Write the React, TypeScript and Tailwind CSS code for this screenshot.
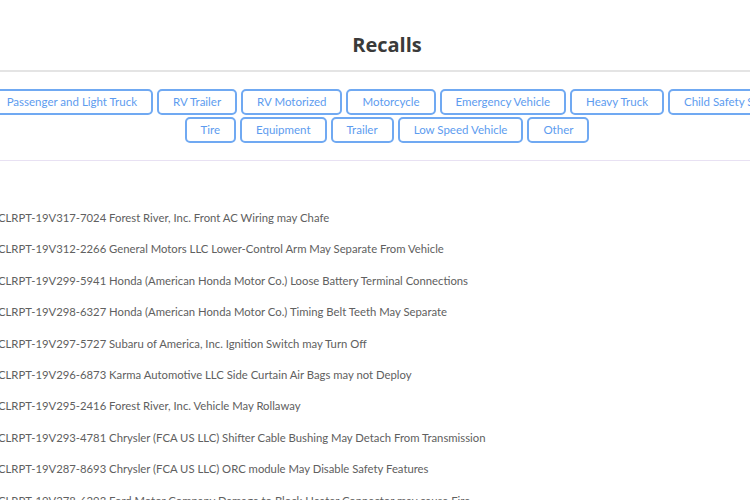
const categories1 = [
  "Passenger and Light Truck",
  "RV Trailer",
  "RV Motorized",
  "Motorcycle",
  "Emergency Vehicle",
  "Heavy Truck",
  "Child Safety Seat",
];
const categories2 = ["Tire", "Equipment", "Trailer", "Low Speed Vehicle", "Other"];

const recalls = [
  "CLRPT-19V317-7024 Forest River, Inc. Front AC Wiring may Chafe",
  "CLRPT-19V312-2266 General Motors LLC Lower-Control Arm May Separate From Vehicle",
  "CLRPT-19V299-5941 Honda (American Honda Motor Co.) Loose Battery Terminal Connections",
  "CLRPT-19V298-6327 Honda (American Honda Motor Co.) Timing Belt Teeth May Separate",
  "CLRPT-19V297-5727 Subaru of America, Inc. Ignition Switch may Turn Off",
  "CLRPT-19V296-6873 Karma Automotive LLC Side Curtain Air Bags may not Deploy",
  "CLRPT-19V295-2416 Forest River, Inc. Vehicle May Rollaway",
  "CLRPT-19V293-4781 Chrysler (FCA US LLC) Shifter Cable Bushing May Detach From Transmission",
  "CLRPT-19V287-8693 Chrysler (FCA US LLC) ORC module May Disable Safety Features",
  "CLRPT-19V278-6293 Ford Motor Company Damage to Block Heater Connector may cause Fire",
];

function CategoryButton({ label }: { label: string }) {
  return (
    <button className="h-[26px] shrink-0 whitespace-nowrap rounded-[5px] border-2 border-[#70a9f2] bg-white px-[14px] text-[11.5px] leading-none text-[#5d9cef]">
      {label}
    </button>
  );
}

export default function App() {
  return (
    <div className="h-[500px] w-[750px] overflow-hidden bg-white font-['Lato',sans-serif]">
      <div className="ml-[-28px] w-[830px]">
        <header className="flex h-[70px] items-end justify-center pb-[15px]">
          <h1 className="font-['Open_Sans',sans-serif] text-[20px] font-bold leading-none text-[#3a3a3a]">
            Recalls
          </h1>
        </header>
        <div className="border-t-2 border-[#e4e4e4]" />
        <nav className="flex flex-col items-center gap-[2px] pt-[17px] pb-[17px]">
          <div className="flex gap-[4px] pl-[2px]">
            {categories1.map((c) => (
              <CategoryButton key={c} label={c} />
            ))}
          </div>
          <div className="flex gap-[4px]">
            {categories2.map((c) => (
              <CategoryButton key={c} label={c} />
            ))}
          </div>
        </nav>
        <div className="border-t border-[#e8e1f3]" />
      </div>

      <ul className="ml-[-2px] pt-[49px]">
        {recalls.map((r) => (
          <li key={r} className="h-[31.4px] whitespace-nowrap text-[11.3px] leading-[16px] text-[#606060]">
            {r}
          </li>
        ))}
      </ul>
    </div>
  );
}
